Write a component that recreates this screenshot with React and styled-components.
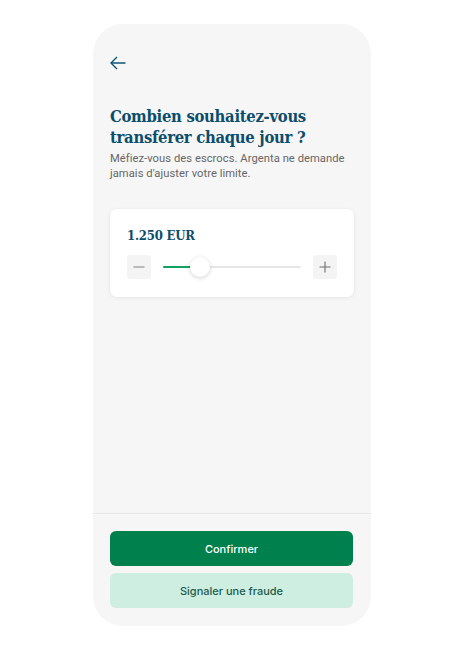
import React, { useState } from 'react';
import styled, { createGlobalStyle } from 'styled-components';

const GlobalStyle = createGlobalStyle`
  html, body {
    margin: 0;
    padding: 0;
    background: #ffffff;
  }
  body {
    font-family: Roboto, "Liberation Sans", sans-serif;
  }
`;

const Page = styled.div`
  display: flex;
  justify-content: center;
  padding-top: 24px;
`;

const Phone = styled.div`
  width: 278px;
  height: 602px;
  border-radius: 30px;
  background: #f6f6f6;
  display: flex;
  flex-direction: column;
  overflow: hidden;
`;

const Content = styled.div`
  flex: 1;
  padding: 29px 17px 0 17px;
  display: flex;
  flex-direction: column;
`;

const BackButton = styled.button`
  width: 20px;
  height: 20px;
  padding: 0;
  border: 0;
  background: none;
  color: #0d5473;
  display: flex;
  align-items: center;
  cursor: pointer;
`;

const Title = styled.h1`
  margin: 33px 0 0;
  font-family: "DejaVu Serif Condensed", "DejaVu Serif", serif;
  font-stretch: condensed;
  font-weight: 700;
  font-size: 16.5px;
  line-height: 21px;
  color: #0c4d6b;
  letter-spacing: -0.3px;
`;

const Subtitle = styled.p`
  margin: 4px 0 0;
  font-size: 11.2px;
  line-height: 14.5px;
  letter-spacing: 0.05px;
  white-space: nowrap;
  color: #666;
`;

const Card = styled.div`
  margin-top: 28px;
  background: #fff;
  border-radius: 7px;
  box-shadow: 0 1px 4px rgba(0, 0, 0, 0.08);
  padding: 19px 17px 18px;
`;

const Amount = styled.div`
  font-family: "DejaVu Serif Condensed", "DejaVu Serif", serif;
  font-stretch: condensed;
  font-weight: 700;
  font-size: 13px;
  color: #0c4d6b;
  letter-spacing: -0.2px;
`;

const SliderRow = styled.div`
  margin-top: 12px;
  display: flex;
  align-items: center;
  gap: 12px;
`;

const StepButton = styled.button`
  width: 24px;
  height: 24px;
  border: 0;
  border-radius: 3px;
  background: #f4f4f4;
  color: #8a8a8a;
  padding: 0;
  display: flex;
  align-items: center;
  justify-content: center;
  cursor: pointer;
`;

const Track = styled.div`
  position: relative;
  flex: 1;
  height: 2px;
  background: #e6e6e6;
  border-radius: 1px;
`;

const Fill = styled.div`
  position: absolute;
  left: 0;
  top: 0;
  height: 2px;
  background: #13a061;
  border-radius: 1px;
`;

const Thumb = styled.div`
  position: absolute;
  top: -9px;
  width: 20px;
  height: 20px;
  margin-left: -10px;
  border-radius: 50%;
  background: #fff;
  box-shadow: 0 1px 4px rgba(0, 0, 0, 0.18);
`;

const Footer = styled.div`
  border-top: 1px solid #e8e8e8;
  padding: 17px 18px 18px 17px;
  display: flex;
  flex-direction: column;
  gap: 7px;
`;

const Button = styled.button`
  height: 35px;
  border: 0;
  border-radius: 6px;
  font-family: Inter, Roboto, "Liberation Sans", sans-serif;
  font-size: 11px;
  font-weight: 500;
  background: ${p => (p.$variant === 'primary' ? '#00804c' : '#cdeee0')};
  color: ${p => (p.$variant === 'primary' ? '#ffffff' : '#1c5b4c')};
  cursor: pointer;
`;

const App = () => {
  const [value] = useState(27);

  return (
    <>
      <GlobalStyle />
      <Page>
        <Phone>
          <Content>
            <BackButton aria-label="Retour">
              <svg width="16" height="14" viewBox="0 0 16 14" fill="none" stroke="currentColor" strokeWidth="1.4">
                <path d="M15.5 7H1.2" />
                <path d="M7 1L1 7l6 6" />
              </svg>
            </BackButton>
            <Title>
              Combien souhaitez-vous
              <br />
              transférer chaque jour ?
            </Title>
            <Subtitle>
              Méfiez-vous des escrocs. Argenta ne demande
              <br />
              jamais d'ajuster votre limite.
            </Subtitle>
            <Card>
              <Amount>1.250 EUR</Amount>
              <SliderRow>
                <StepButton aria-label="Diminuer">
                  <svg width="12" height="12" viewBox="0 0 12 12" stroke="currentColor" strokeWidth="1.1">
                    <path d="M0.5 6h11" />
                  </svg>
                </StepButton>
                <Track>
                  <Fill style={{ width: `${value}%` }} />
                  <Thumb style={{ left: `${value}%` }} />
                </Track>
                <StepButton aria-label="Augmenter">
                  <svg width="12" height="12" viewBox="0 0 12 12" stroke="#6d6d6d" strokeWidth="1.1">
                    <path d="M0.5 6h11M6 0.5v11" />
                  </svg>
                </StepButton>
              </SliderRow>
            </Card>
          </Content>
          <Footer>
            <Button $variant="primary">Confirmer</Button>
            <Button $variant="secondary">Signaler une fraude</Button>
          </Footer>
        </Phone>
      </Page>
    </>
  );
};

export default App;
